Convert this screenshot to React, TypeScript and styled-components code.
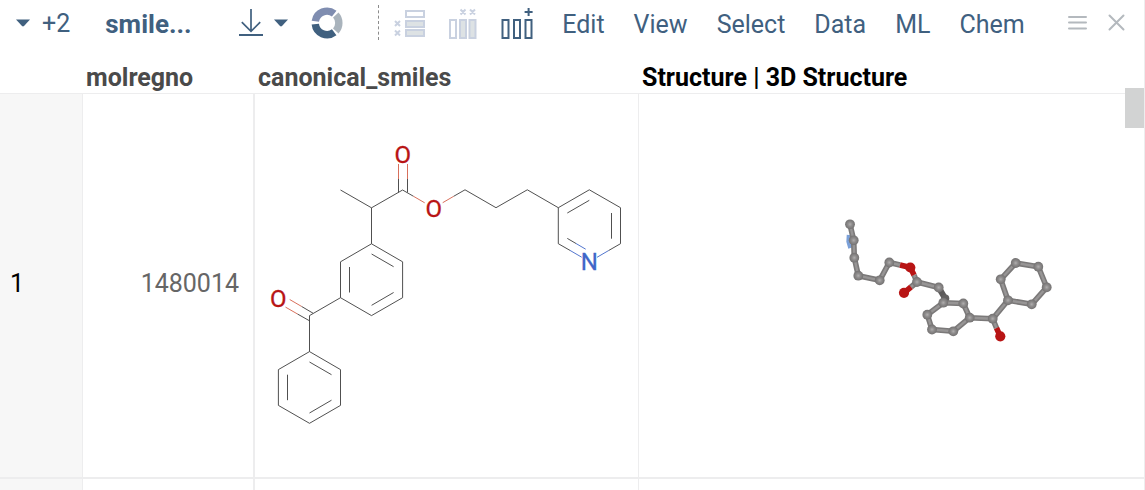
import React from 'react';
import styled, { createGlobalStyle } from 'styled-components';

const colors = {
  accent: '#40607f',
  muted: '#c9d1e0',
  border: '#ededee',
  carbon: '#3c3c3c',
  oxygen: '#b81414',
  oxygenBond: '#d4604a',
  nitrogen: '#3f66c8',
};

const GlobalStyle = createGlobalStyle`
  *, *::before, *::after { box-sizing: border-box; }
  body {
    margin: 0;
    background: #ffffff;
    font-family: Roboto, "Liberation Sans", sans-serif;
  }
`;

const Viewer = styled.main`
  display: flex;
  flex-direction: column;
  height: 100vh;
  overflow: hidden;
  border-right: 1px solid ${colors.border};
`;

const Toolbar = styled.header`
  display: flex;
  align-items: center;
  flex: none;
  height: 45px;
  padding: 0 19px 0 16px;
`;

const IconButton = styled.button<{ $gap?: number }>`
  display: flex;
  align-items: center;
  flex: none;
  margin: 0 0 0 ${(p) => p.$gap ?? 0}px;
  padding: 0;
  border: 0;
  background: none;
  color: ${colors.accent};
  font: inherit;
  cursor: pointer;

  &:disabled { cursor: default; }
`;

const HiddenCount = styled.span`
  margin-left: 12px;
  padding-top: 2px;
  font-size: 25px;
  line-height: 32px;
`;

const CurrentColumn = styled.h1`
  flex: none;
  width: 86px;
  margin: 0 0 0 35px;
  padding-top: 2px;
  color: ${colors.accent};
  font-size: 26px;
  font-weight: 700;
  line-height: 32px;
`;

const Divider = styled.div`
  flex: none;
  height: 35px;
  margin-left: 35px;
  border-left: 1px dashed #8c8c8c;
`;

const Menu = styled.nav`
  display: flex;
  flex: none;
  gap: 29px;
  margin-left: 29px;
`;

const MenuButton = styled.button`
  padding: 4px 0 0;
  border: 0;
  background: none;
  color: ${colors.accent};
  font: inherit;
  font-size: 25px;
  line-height: 32px;
  cursor: pointer;
`;

const WindowActions = styled.div`
  display: flex;
  align-items: center;
  gap: 21px;
  margin-left: auto;
`;

const GridArea = styled.div`
  position: relative;
  flex: 1;
  min-height: 0;
  padding-top: 17px;
`;

const ScrollTrack = styled.div`
  position: absolute;
  top: 0;
  right: 0;
  bottom: 0;
  width: 19px;
  padding-top: 43px;
`;

const ScrollThumb = styled.div`
  height: 40px;
  background: #d2d3d3;
`;

const Table = styled.table`
  width: 100%;
  table-layout: fixed;
  border-collapse: separate;
  border-spacing: 0;
`;

const Column = styled.col<{ $width?: number }>`
  ${(p) => (p.$width ? `width: ${p.$width}px;` : '')}
`;

const ColumnHeader = styled.th<{ $strong?: boolean }>`
  height: 32px;
  padding: 0 3px;
  border-bottom: 1px solid ${colors.border};
  color: ${(p) => (p.$strong ? '#000000' : '#4a4a4a')};
  font-size: 25px;
  font-weight: 700;
  line-height: 28px;
  text-align: left;
  white-space: nowrap;
`;

const Cell = styled.td<{ $divider?: number }>`
  height: 385px;
  padding: 0;
  border-right: ${(p) => p.$divider ?? 0}px solid ${colors.border};
  border-bottom: 2px solid ${colors.border};
`;

const RowNumber = styled.th`
  padding: 0 10px 5px;
  border-right: 1px solid ${colors.border};
  border-bottom: 2px solid ${colors.border};
  background: #f7f7f7;
  color: #000000;
  font-size: 25px;
  font-weight: 400;
  text-align: left;
`;

const NumberCell = styled(Cell)`
  padding: 0 14px 5px;
  color: #666666;
  font-size: 25px;
  text-align: right;
`;

const Drawing = styled.svg`
  display: block;
  width: 100%;
  height: 383px;
`;

const Caret = () => (
  <svg width="14" height="8" viewBox="0 0 14 8" aria-hidden="true">
    <path d="M0 0.5H14L8 7Q7 7.8 6 7Z" fill="currentColor" />
  </svg>
);

const DownloadIcon = () => (
  <svg width="24" height="28" viewBox="0 0 24 28" fill="none" stroke="currentColor" strokeWidth="1.7" aria-hidden="true">
    <path d="M12 0V22M2.8 13.2L12 22.4L21.2 13.2" />
    <path d="M0 26H24" strokeWidth="2" />
  </svg>
);

const DonutIcon = () => (
  <svg width="32" height="32" viewBox="-16 -16 32 32" fill="none" strokeWidth="7.4" aria-hidden="true">
    <path d="M-11.7 -1.8A11.8 11.8 0 0 1 7.2 -9.3" stroke="#7f8db0" />
    <path d="M8.8 -7.9A11.8 11.8 0 0 1 8.8 7.9" stroke="#a9b3bc" />
    <path d="M7.2 9.3A11.8 11.8 0 0 1 -11.7 1.2" stroke={colors.accent} />
  </svg>
);

const FilterRowsIcon = () => (
  <svg width="31" height="30" viewBox="0 0 31 30" fill="none" stroke={colors.muted} strokeWidth="2" aria-hidden="true">
    <rect x="12" y="3" width="18" height="6" />
    <rect x="12" y="13" width="18" height="6" fill="#dde2e4" />
    <rect x="12" y="22" width="18" height="6" fill="#dde2e4" />
    <path d="M1 13L6 18M6 13L1 18M1 22.5L6 27.5M6 22.5L1 27.5" />
  </svg>
);

const FilterColumnsIcon = () => (
  <svg width="28" height="32" viewBox="0 0 28 32" fill="none" stroke={colors.muted} strokeWidth="2" aria-hidden="true">
    <rect x="1" y="13" width="6" height="18" />
    <rect x="11" y="13" width="6" height="18" fill="#dde2e4" />
    <rect x="20.5" y="13" width="6" height="18" fill="#dde2e4" />
    <path d="M11.5 2.5L16.5 7.5M16.5 2.5L11.5 7.5M21 2.5L26 7.5M26 2.5L21 7.5" />
  </svg>
);

const AddColumnIcon = () => (
  <svg width="32" height="32" viewBox="0 0 32 32" fill="none" stroke="currentColor" strokeWidth="2" aria-hidden="true">
    <rect x="1.5" y="13" width="6" height="18" />
    <rect x="13" y="13" width="6" height="18" />
    <rect x="24.5" y="13" width="6" height="18" />
    <path d="M27.6 1V9M23.6 5H31.6" />
  </svg>
);

const MenuIcon = () => (
  <svg width="19" height="18" viewBox="0 0 19 18" stroke="#b4b9be" strokeWidth="2" strokeLinecap="round" aria-hidden="true">
    <path d="M1 3H18M1 8.5H18M1 14.5H18" />
  </svg>
);

const CloseIcon = () => (
  <svg width="17" height="17" viewBox="0 0 17 17" stroke="#b4b9be" strokeWidth="2" strokeLinecap="round" aria-hidden="true">
    <path d="M1.5 1.5L15.5 15.5M15.5 1.5L1.5 15.5" />
  </svg>
);

const AtomLabel = styled.text`
  font-family: Roboto, sans-serif;
  font-size: 24px;
  text-anchor: middle;
`;

const SmilesDrawing = () => (
  <Drawing viewBox="255 94 383 383" role="img" aria-label="2D structure" fill="none" strokeWidth="0.9">
    <g stroke={colors.carbon}>
      <path d="M340.5 190L371.5 207.8L402.6 190M371.5 207.8V243.8" />
      <path d="M371.5 243.8L402.6 261.8V297.7L371.5 315.6L340.5 297.7V261.8Z" />
      <path d="M371.6 254L393.6 266.7M349.5 267V292.5M393.6 292.5L371.6 305.3" />
      <path d="M340.5 297.7L309.5 315.6V351.6" />
      <path d="M309.5 351.6L340.5 369.6V405.4L309.5 423.3L278.4 405.4V369.6Z" />
      <path d="M309.5 362L331.5 374.7M287.5 374.7V400.2M331.5 400.2L309.5 413" />
      <path d="M398.5 179V192.4M407.5 179V192.4M402.6 190L413.5 196.3" />
      <path d="M313 313.2L301.5 306.4M309.5 320.8L297.5 314" />
      <path d="M453.5 196.4L465 189.8L496 207.7L527.3 189.8L558.3 207.7V243.7L570 250.4" />
      <path d="M558.3 207.7L589.3 189.8L620.5 207.7V243.7L608.5 250.6" />
      <path d="M567.3 213L589.3 200.3M611.5 213V238.7M567.3 238.4L576 243.5" />
    </g>
    <g stroke={colors.oxygenBond}>
      <path d="M398.5 164V179M407.5 164V179M413.5 196.3L424.7 202.8M442.7 202.7L453.5 196.4" />
      <path d="M301.5 306.4L289.7 299.5M297.5 314L285.5 307.1" />
    </g>
    <g stroke={colors.nitrogen}>
      <path d="M570 250.4L581.7 257.2M597 257.3L608.5 250.6M576 243.5L585.7 249.2" />
    </g>
    <g fill={colors.oxygen} stroke={colors.oxygen} strokeWidth="0.3">
      <AtomLabel x="402.7" y="162.5">O</AtomLabel>
      <AtomLabel x="433.7" y="216.5">O</AtomLabel>
      <AtomLabel x="278.2" y="306.5">O</AtomLabel>
    </g>
    <g fill={colors.nitrogen} stroke={colors.nitrogen} strokeWidth="0.3">
      <AtomLabel x="589.3" y="270">N</AtomLabel>
    </g>
  </Drawing>
);

type Point = [number, number];

const carbons: Point[] = [
  [850, 224.3], [853.7, 240.3], [854.3, 257.7], [858.3, 275.7], [879.7, 280.3], [889.3, 262.5],
  [917, 282], [938.7, 287.5], [943.3, 302.7], [927.3, 314.7], [932, 329.5], [953.3, 331.3],
  [969.7, 317.7], [963.3, 303.5], [992.7, 318.7], [1008, 300.3], [1000.7, 279.3],
  [1015.7, 263], [1038.3, 266.7], [1046.7, 287.3], [1031.7, 304.3],
];

const oxygens: Point[] = [[910.3, 267.5], [904, 292.8], [1000.3, 336.3]];

const stickPath =
  'M850 224.3L853.7 240.3L854.3 257.7L858.3 275.7L879.7 280.3L889.3 262.5L900 265' +
  'M914 275L917 282L938.7 287.5M917 282L911 287' +
  'M943.3 302.7L927.3 314.7L932 329.5L953.3 331.3L969.7 317.7L963.3 303.5Z' +
  'M969.7 317.7L992.7 318.7L1008 300.3M992.7 318.7L996.5 328' +
  'M1008 300.3L1000.7 279.3L1015.7 263L1038.3 266.7L1046.7 287.3L1031.7 304.3Z';

const StructureDrawing = () => (
  <Drawing viewBox="639 94 505 383" role="img" aria-label="3D structure" fill="none">
    <defs>
      <radialGradient id="carbonAtom">
        <stop offset="0" stopColor="#b0aeae" />
        <stop offset="0.45" stopColor="#8e8c8c" />
        <stop offset="1" stopColor="#737171" />
      </radialGradient>
    </defs>
    <path d="M849 235L848.6 241.5L850.5 248" stroke="#7ba0d8" strokeWidth="4.5" />
    <path d="M938.7 287.5L945.3 298.7" stroke="#5c5a5a" strokeWidth="6" />
    <circle cx="945.3" cy="298.5" r="4" fill="#626060" />
    <path d={stickPath} stroke="#7b7979" strokeWidth="5.6" strokeLinejoin="round" />
    <path d={stickPath} stroke="#979595" strokeWidth="2.4" strokeLinejoin="round" />
    <path d="M900 265L910.3 267.5L914 275M911 287L904 292.8M996.5 328L1000.3 336.3" stroke={colors.oxygen} strokeWidth="5.6" />
    {carbons.map(([x, y]) => (
      <circle key={`${x}-${y}`} cx={x} cy={y} r="4.9" fill="url(#carbonAtom)" />
    ))}
    {oxygens.map(([x, y]) => (
      <circle key={`${x}-${y}`} cx={x} cy={y} r="5.1" fill={colors.oxygen} />
    ))}
  </Drawing>
);

const menuItems = ['Edit', 'View', 'Select', 'Data', 'ML', 'Chem'];

export default function App() {
  return (
    <>
      <GlobalStyle />
      <Viewer>
        <Toolbar>
          <IconButton>
            <Caret />
            <HiddenCount>+2</HiddenCount>
          </IconButton>
          <CurrentColumn>smile...</CurrentColumn>
          <IconButton $gap={48} aria-label="Download"><DownloadIcon /></IconButton>
          <IconButton $gap={11} aria-label="Download options"><Caret /></IconButton>
          <IconButton $gap={23} aria-label="Chart"><DonutIcon /></IconButton>
          <Divider />
          <IconButton $gap={15} aria-label="Filter rows" disabled><FilterRowsIcon /></IconButton>
          <IconButton $gap={24} aria-label="Filter columns" disabled><FilterColumnsIcon /></IconButton>
          <IconButton $gap={24} aria-label="Add column"><AddColumnIcon /></IconButton>
          <Menu>
            {menuItems.map((item) => (
              <MenuButton key={item}>{item}</MenuButton>
            ))}
          </Menu>
          <WindowActions>
            <IconButton aria-label="Menu"><MenuIcon /></IconButton>
            <IconButton aria-label="Close"><CloseIcon /></IconButton>
          </WindowActions>
        </Toolbar>
        <GridArea>
          <Table>
            <colgroup>
              <Column $width={83} />
              <Column $width={172} />
              <Column $width={384} />
              <Column />
            </colgroup>
            <thead>
              <tr>
                <ColumnHeader aria-label="Row" />
                <ColumnHeader scope="col">molregno</ColumnHeader>
                <ColumnHeader scope="col">canonical_smiles</ColumnHeader>
                <ColumnHeader scope="col" $strong>Structure | 3D Structure</ColumnHeader>
              </tr>
            </thead>
            <tbody>
              <tr>
                <RowNumber scope="row">1</RowNumber>
                <NumberCell $divider={2}>1480014</NumberCell>
                <Cell $divider={1}><SmilesDrawing /></Cell>
                <Cell><StructureDrawing /></Cell>
              </tr>
              <tr>
                <RowNumber scope="row" />
                <NumberCell $divider={2} />
                <Cell $divider={1} />
                <Cell />
              </tr>
            </tbody>
          </Table>
          <ScrollTrack>
            <ScrollThumb />
          </ScrollTrack>
        </GridArea>
      </Viewer>
    </>
  );
}
